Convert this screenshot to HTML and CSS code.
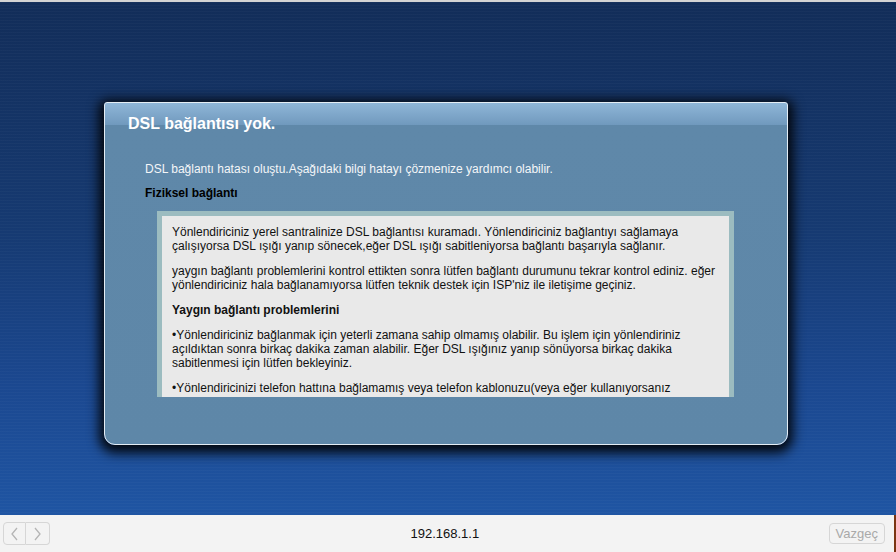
FILE: index.html
```html
<!DOCTYPE html>
<html lang="tr">
<head>
  <meta charset="UTF-8" />
  <meta name="viewport" content="width=device-width, initial-scale=1.0"/>
  <title>192.168.1.1</title>
  <link rel="stylesheet" href="styles.css">
</head>
<body>
  <div class="topline"></div>
  <div class="screen">
    <div class="dialog">
      <h1>DSL bağlantısı yok.</h1>
      <p class="intro">DSL bağlantı hatası oluştu.Aşağıdaki bilgi hatayı çözmenize yardımcı olabilir.</p>
      <p class="section">Fiziksel bağlantı</p>

      <div class="help">
        <p>Yönlendiriciniz yerel santralinize DSL bağlantısı kuramadı. Yönlendiriciniz bağlantıyı sağlamaya<br>çalışıyorsa DSL ışığı yanıp sönecek,eğer DSL ışığı sabitleniyorsa bağlantı başarıyla sağlanır.</p>
        <p>yaygın bağlantı problemlerini kontrol ettikten sonra lütfen bağlantı durumunu tekrar kontrol ediniz. eğer<br>yönlendiriciniz hala bağlanamıyorsa lütfen teknik destek için ISP'niz ile iletişime geçiniz.</p>
        <p class="bold">Yaygın bağlantı problemlerini</p>
        <p>•Yönlendiriciniz bağlanmak için yeterli zamana sahip olmamış olabilir. Bu işlem için yönlendiriniz<br>açıldıktan sonra birkaç dakika zaman alabilir. Eğer DSL ışığınız yanıp sönüyorsa birkaç dakika<br>sabitlenmesi için lütfen bekleyiniz.</p>
        <p>•Yönlendiricinizi telefon hattına bağlamamış veya telefon kablonuzu(veya eğer kullanıyorsanız<br>splitter'ınızı) düzgün bir şekilde bağlamamış olabilirsiniz. lütfen kablolarınızı kontrol ediniz.</p>
      </div>
    </div>
  </div>

  <div class="bar">
    <div class="nav">
      <span class="navbtn">
        <svg width="9" height="14" viewBox="0 0 9 14"><path d="M7 1 L2 7 L7 13" fill="none" stroke="#b4b4b4" stroke-width="1.3"/></svg>
      </span>
      <span class="navbtn">
        <svg width="9" height="14" viewBox="0 0 9 14"><path d="M2 1 L7 7 L2 13" fill="none" stroke="#b4b4b4" stroke-width="1.3"/></svg>
      </span>
    </div>
    <div class="url">192.168.1.1</div>
    <span class="cancel">Vazgeç</span>
  </div>
</body>
</html>
```

FILE: styles.css
```css
body {
  margin: 0;
  font-family: "Liberation Sans", Arial, sans-serif;
  width: 896px;
  height: 552px;
  overflow: hidden;
}
.topline {
  height: 2px;
  background: #d4d4d4;
}
.screen {
  height: 513px;
  box-sizing: border-box;
  padding: 100px 0 0 104px;
  background:
    repeating-linear-gradient(to bottom, rgba(255,255,255,0.025) 0, rgba(255,255,255,0.025) 1px, transparent 1px, transparent 3px),
    linear-gradient(to bottom, #122d59 0%, #163a72 45%, #1b4890 75%, #1f55a3 100%);
}
.dialog {
  width: 684px;
  height: 343px;
  box-sizing: border-box;
  border: 1px solid #e4edf5;
  border-radius: 3px 3px 11px 11px;
  padding-top: 12px;
  background: linear-gradient(to bottom, #8fb6d8 0, #7099bd 22px, #5f88a9 22px, #5e87a8 100%);
  box-shadow: 0 3px 12px 5px rgba(0,0,0,0.9);
}
.dialog h1 {
  margin: 0 0 0 23px;
  font-size: 16px;
  line-height: 18px;
  font-weight: bold;
  color: #fff;
}
.intro {
  margin: 29px 0 0 40px;
  font-size: 12px;
  line-height: 14px;
  color: #f4f6f8;
}
.section {
  margin: 10px 0 0 40px;
  font-size: 12px;
  line-height: 14px;
  font-weight: bold;
  color: #000;
}
.help {
  margin: 11px 0 0 52px;
  width: 577px;
  height: 186px;
  box-sizing: border-box;
  border: 5px solid #9cbcc0;
  border-bottom: 0;
  background: #e9e9e9;
  padding: 9px 10px 0 10px;
  overflow: hidden;
}
.help p {
  margin: 0 0 11px;
  font-size: 12px;
  line-height: 14px;
  color: #111;
  white-space: nowrap;
}
.help .bold {
  font-weight: bold;
}
.bar {
  height: 37px;
  background: #f3f3f3;
  display: flex;
  align-items: center;
  padding: 0 9px 0 3px;
  border-right: 2px solid #7a3512;
}
.nav {
  display: flex;
}
.navbtn {
  width: 23px;
  height: 23px;
  box-sizing: border-box;
  border: 1px solid #d6d6d6;
  display: flex;
  align-items: center;
  justify-content: center;
}
.navbtn:first-child {
  border-radius: 4px 0 0 4px;
}
.navbtn:last-child {
  border-left: 0;
  border-radius: 0 4px 4px 0;
  width: 24px;
}
.url {
  flex: 1;
  text-align: center;
  font-size: 13px;
  color: #111;
  padding-left: 11px;
}
.cancel {
  height: 21px;
  box-sizing: border-box;
  border: 1px solid #d6d6d6;
  border-radius: 4px;
  padding: 0 6px;
  font-size: 13px;
  line-height: 19px;
  color: #a9a9a9;
}
```
